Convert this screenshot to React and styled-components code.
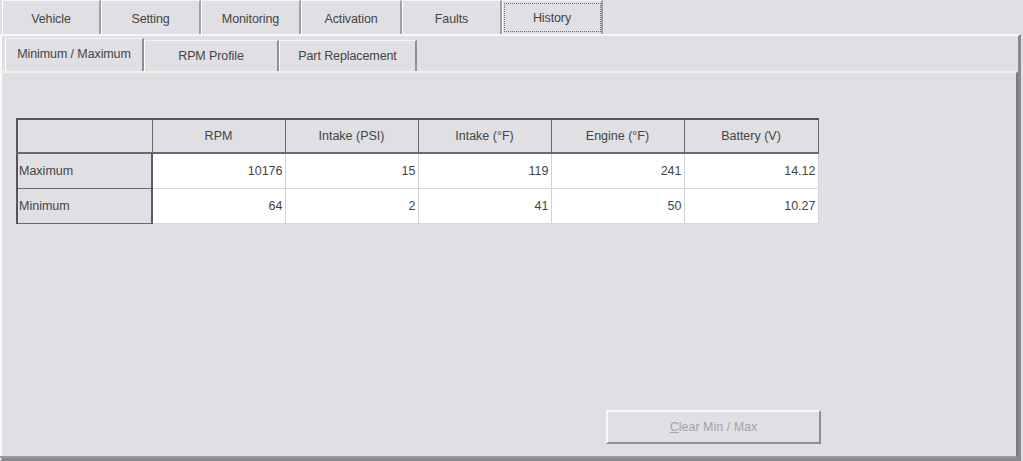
import React from "react";
import styled, { createGlobalStyle } from "styled-components";

const Global = createGlobalStyle`
  html, body { margin: 0; padding: 0; background: #e0dfe3; }
  * { box-sizing: border-box; }
`;

const Window = styled.div`
  width: 1023px;
  height: 461px;
  background: #e0dfe3;
  display: flex;
  flex-direction: column;
  font-family: "Liberation Sans", Arial, sans-serif;
  font-size: 12.5px;
  color: #454545;
  overflow: hidden;
`;

const TabRow = styled.div`
  display: flex;
  height: 34px;
  padding-left: 2px;
  flex-shrink: 0;
`;

const Tab = styled.div`
  width: ${(p) => p.$w}px;
  height: 34px;
  border-top: 1px solid #f4f4f6;
  border-left: 1px solid #ffffff;
  border-right: 2px solid #a0a0a4;
  display: flex;
  align-items: center;
  justify-content: center;
  padding-top: ${(p) => (p.$active ? 1 : 3)}px;
  position: relative;
  letter-spacing: -0.1px;
`;

const Focus = styled.span`
  position: absolute;
  left: 1px;
  right: 0;
  top: 2px;
  bottom: 2px;
  border: 1px dotted #707070;
`;

const OuterPanel = styled.div`
  flex: 1;
  display: flex;
  flex-direction: column;
  border-top: 2px solid #f6f6f8;
  border-left: 2px solid #fbfbfb;
  border-right: 3px solid #8a8a8e;
  border-bottom: 3px solid #8a8a8e;
  margin-right: 2px;
  padding: 2px 0 0 2px;
`;

const SubTabRow = styled.div`
  display: flex;
  height: 33px;
  flex-shrink: 0;
  align-items: flex-end;
  padding-left: 1px;
`;

const SubTab = styled.div`
  width: ${(p) => p.$w}px;
  height: ${(p) => (p.$active ? 33 : 31)}px;
  border-top: 1px solid #f4f4f6;
  border-left: 1px solid #ffffff;
  border-right: 2px solid #909094;
  display: flex;
  align-items: center;
  justify-content: center;
  padding-bottom: ${(p) => (p.$active ? 3 : 0)}px;
  letter-spacing: -0.1px;
`;

const InnerPanel = styled.div`
  flex: 1;
  display: flex;
  flex-direction: column;
  border-top: 2px solid #f3f2ea;
  border-right: 2px solid #7c7c80;
  border-bottom: 2px solid #9a9a9e;
  margin-left: -4px;
  padding: 45px 0 12px 16px;
`;

const Content = styled.div`
  width: 805px;
  flex: 1;
  display: flex;
  flex-direction: column;
`;

const Table = styled.table`
  border-collapse: collapse;
  table-layout: fixed;
  width: 801px;
  border-top: 2px solid #555558;
  border-left: 2px solid #555558;
`;

const HeadCell = styled.th`
  height: 34px;
  font-weight: normal;
  text-align: center;
  background: #e0dfe3;
  border-right: 1px solid #6a6a6e;
  border-bottom: 2px solid #6a6a6e;
  padding: 0;
  color: inherit;
`;

const RowHead = styled.td`
  height: 35px;
  background: #e0dfe3;
  border-right: 2px solid #5c5c60;
  border-bottom: 1px solid #6a6a6e;
  padding: 0 0 0 1px;
  text-align: left;
`;

const Cell = styled.td`
  height: 35px;
  background: #ffffff;
  border-right: 1px solid #d2d2d4;
  border-bottom: 1px solid #d8d8da;
  text-align: right;
  padding: 0 2px 0 0;
`;

const Spacer = styled.div`
  flex: 1;
`;

const ButtonRow = styled.div`
  display: flex;
  justify-content: flex-end;
`;

const Button = styled.button`
  width: 215px;
  height: 34px;
  background: #e0dfe3;
  border-top: 2px solid #f8f8f8;
  border-left: 2px solid #f8f8f8;
  border-right: 2px solid #8e8e92;
  border-bottom: 2px solid #8e8e92;
  font-family: inherit;
  font-size: 12.5px;
  color: #a4a4a8;
  padding: 0;
  u { text-decoration: underline; }
`;

const tabs = [
  ["Vehicle", 99],
  ["Setting", 100],
  ["Monitoring", 100],
  ["Activation", 101],
  ["Faults", 100],
  ["History", 101],
];

const subTabs = [
  ["Minimum / Maximum", 139],
  ["RPM Profile", 135],
  ["Part Replacement", 138],
];

const headers = ["RPM", "Intake (PSI)", "Intake (\u00B0F)", "Engine (\u00B0F)", "Battery (V)"];
const rows = [
  ["Maximum", ["10176", "15", "119", "241", "14.12"]],
  ["Minimum", ["64", "2", "41", "50", "10.27"]],
];
const widths = [135, 133, 133, 133, 133, 134];

export default function App() {
  return (
    <Window>
      <Global />
      <TabRow>
        {tabs.map(([t, w]) => (
          <Tab key={t} $w={w} $active={t === "History"}>
            {t === "History" && <Focus />}
            {t}
          </Tab>
        ))}
      </TabRow>
      <OuterPanel>
        <SubTabRow>
          {subTabs.map(([t, w], i) => (
            <SubTab key={t} $w={w} $active={i === 0}>
              {t}
            </SubTab>
          ))}
        </SubTabRow>
        <InnerPanel>
          <Content>
            <Table>
              <colgroup>
                {widths.map((w, i) => (
                  <col key={i} style={{ width: w }} />
                ))}
              </colgroup>
              <thead>
                <tr>
                  <HeadCell />
                  {headers.map((h) => (
                    <HeadCell key={h}>{h}</HeadCell>
                  ))}
                </tr>
              </thead>
              <tbody>
                {rows.map(([label, vals]) => (
                  <tr key={label}>
                    <RowHead>{label}</RowHead>
                    {vals.map((v, i) => (
                      <Cell key={i}>{v}</Cell>
                    ))}
                  </tr>
                ))}
              </tbody>
            </Table>
            <Spacer />
            <ButtonRow>
              <Button disabled>
                <u>C</u>lear Min / Max
              </Button>
            </ButtonRow>
          </Content>
        </InnerPanel>
      </OuterPanel>
    </Window>
  );
}
